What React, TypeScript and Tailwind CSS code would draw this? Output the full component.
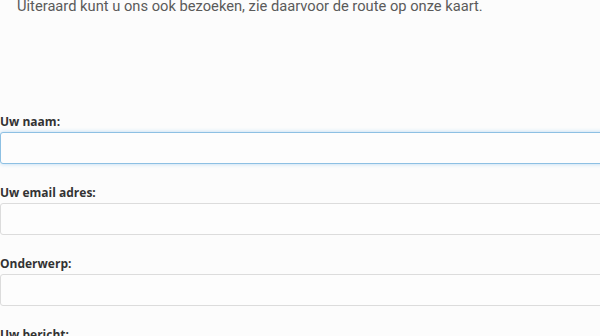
export default function App() {
  const fields = [
    { label: 'Uw naam:', focus: true },
    { label: 'Uw email adres:', focus: false },
    { label: 'Onderwerp:', focus: false },
    { label: 'Uw bericht:', focus: false },
  ];

  return (
    <div className="w-[600px] h-[336px] overflow-hidden bg-[#fcfcfc]">
      <p className="-mt-[4px] pl-[17px] text-[14.7px] leading-[20px] text-[#5a5a5a] font-['Roboto',sans-serif] whitespace-nowrap">
        Uiteraard kunt u ons ook bezoeken, zie daarvoor de route op onze kaart.
      </p>

      <form className="mt-[98px] flex flex-col gap-[21px]">
        {fields.map((f) => (
          <div key={f.label} className="flex flex-col">
            <label className="text-[12px] leading-[15px] font-bold text-[#333] font-['Open_Sans',sans-serif] mb-[3px]">
              {f.label}
            </label>
            <input
              type="text"
              className={
                f.focus
                  ? 'w-[640px] h-[32px] rounded-[3px] bg-[#fdfdfd] border border-[#8dc0e3] shadow-[0_0_4px_rgba(102,175,233,0.45)] outline-none'
                  : 'w-[640px] h-[32px] rounded-[3px] bg-[#fdfdfd] border border-[#dcdcdc] outline-none'
              }
            />
          </div>
        ))}
      </form>
    </div>
  );
}
